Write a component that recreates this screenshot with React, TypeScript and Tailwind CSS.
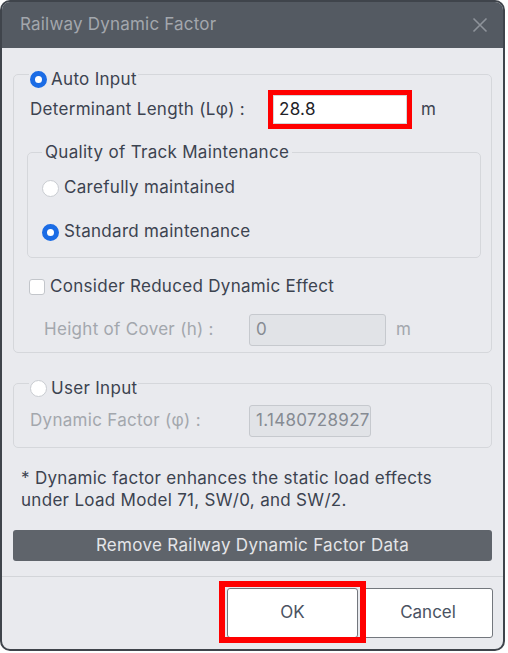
const font = { fontFamily: "Inter, 'Noto Sans', sans-serif" };

function Radio({ checked }: { checked?: boolean }) {
  return checked ? (
    <span className="inline-block h-[17px] w-[17px] shrink-0 rounded-full border-[5px] border-[#1b6ce5] bg-white" />
  ) : (
    <span className="inline-block h-[17px] w-[17px] shrink-0 rounded-full border border-[#c9ccd1] bg-white" />
  );
}

function Field({ value, width }: { value: string; width: string }) {
  return (
    <div
      className={`flex h-[32px] ${width} items-center overflow-hidden whitespace-nowrap rounded-[3px] border border-[#c6c9ce] bg-[#e1e3e7] px-[6px] text-[17px] tracking-[0.3px] text-[#868b93]`}
    >
      {value}
    </div>
  );
}

export default function App() {
  return (
    <div className="min-h-screen bg-white" style={font}>
      <div className="flex w-[505px] flex-col overflow-hidden rounded-[10px] border-2 border-[#3f444b] bg-[#e9eaee]">
        {/* title bar */}
        <div className="flex h-[46px] items-center justify-between bg-[#545a62] pl-[18px] pr-[14px]">
          <span className="text-[17px] tracking-[0.2px] text-[#a3a7ad]">Railway Dynamic Factor</span>
          <svg width="16" height="16" viewBox="0 0 16 16" className="mr-[1px]">
            <path d="M1.5 1.5 L14.5 14.5 M14.5 1.5 L1.5 14.5" stroke="#8e939a" strokeWidth="1.6" />
          </svg>
        </div>

        <div className="flex flex-col px-[11px] pt-[11px] text-[17px] tracking-[0.3px] text-[#3c4350]">
          {/* Auto input */}
          <fieldset className="rounded-[5px] border border-[#d5d7db] pb-[6px] pl-[13px] pr-[10px]">
            <legend className="ml-[2px] flex items-center gap-[4px] px-[1px] pt-[10px] leading-[20px]">
              <Radio checked />
              <span>Auto Input</span>
            </legend>
            <div className="mt-[1px] flex items-center pl-[3px]">
              <span className="w-[238px]">Determinant Length (Lφ) :</span>
              <div className="h-[39px] w-[144px] border-[5px] border-[#ff0000]">
                <div className="flex h-full items-center border border-[#d4d6da] bg-white pl-[5px] text-[17px] text-[#1f2329]">
                  28.8
                </div>
              </div>
              <span className="ml-[9px]">m</span>
            </div>

            <fieldset className="mt-[13px] rounded-[5px] border border-[#d5d7db] pb-[13px] pl-[14px]">
              <legend className="px-[3px] leading-[20px]">Quality of Track Maintenance</legend>
              <div className="mt-[14px] flex h-[24px] items-center gap-[5px]">
                <Radio />
                <span>Carefully maintained</span>
              </div>
              <div className="mt-[20px] flex h-[24px] items-center gap-[5px]">
                <Radio checked />
                <span>Standard maintenance</span>
              </div>
            </fieldset>

            <div className="mt-[17px] flex h-[24px] items-center gap-[5px] pl-[2px]">
              <span className="inline-block h-[16px] w-[16px] rounded-[3px] border border-[#c3c6cb] bg-white" />
              <span>Consider Reduced Dynamic Effect</span>
            </div>

            <div className="mt-[15px] flex items-center pl-[17px]">
              <span className="w-[205px] text-[#a3a7ad]">Height of Cover (h) :</span>
              <Field value="0" width="w-[137px]" />
              <span className="ml-[10px] text-[#a3a7ad]">m</span>
            </div>
          </fieldset>

          {/* User input */}
          <fieldset className="mt-[15px] rounded-[5px] border border-[#d5d7db] pb-[10px] pl-[16px]">
            <legend className="-ml-[1px] flex items-center gap-[4px] px-[1px] pt-[10px] leading-[20px]">
              <Radio />
              <span>User Input</span>
            </legend>
            <div className="mt-[7px] flex items-center">
              <span className="w-[219px] text-[#a3a7ad]">Dynamic Factor (φ) :</span>
              <Field value="1.1480728927" width="w-[122px]" />
            </div>
          </fieldset>

          <p className="mt-[19px] pl-[8px] leading-[22px]">
            * Dynamic factor enhances the static load effects
            <br />
            under Load Model 71, SW/0, and SW/2.
          </p>

          <button className="mt-[19px] h-[31px] rounded-[3px] bg-[#5f646b] text-[17px] tracking-[0.3px] text-[#e4e5e8]">
            Remove Railway Dynamic Factor Data
          </button>
        </div>

        <div className="mt-[15px] h-px bg-[#d3d5d9]" />

        <div className="flex justify-end gap-[5px] pb-[11px] pr-[10px] pt-[11px]">
          <div className="relative">
            <button className="h-[50px] w-[131px] rounded-[3px] border-[1.5px] border-[#73777d] bg-white text-[17px] text-[#4a5262]">
              OK
            </button>
            <div className="pointer-events-none absolute -bottom-[5px] -left-[8px] -right-[8px] -top-[7px] border-[6px] border-[#ff0000]" />
          </div>
          <button className="h-[50px] w-[130px] rounded-[3px] border-[1.5px] border-[#73777d] bg-white text-[17px] text-[#4a5262]">
            Cancel
          </button>
        </div>
      </div>
    </div>
  );
}
